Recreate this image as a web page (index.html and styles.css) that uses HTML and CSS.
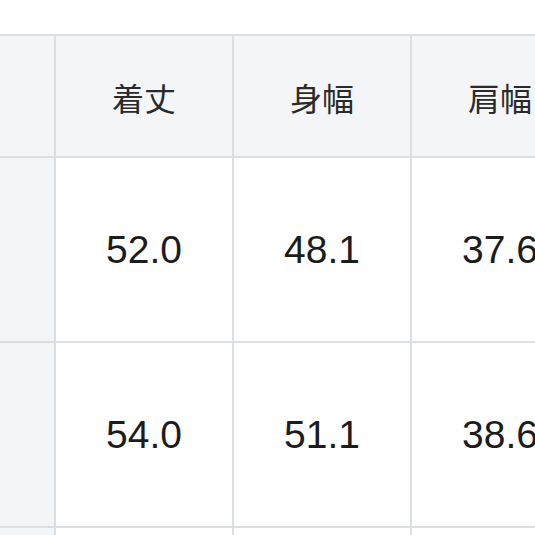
FILE: index.html
```html
<!DOCTYPE html>
<html lang="ja">
<head>
<meta charset="utf-8">
<link rel="stylesheet" href="styles.css">
</head>
<body>
<div class="viewport">
  <div class="table">
    <div class="cell side head"></div>
    <div class="cell head">着丈</div>
    <div class="cell head">身幅</div>
    <div class="cell head">肩幅</div>

    <div class="cell side"></div>
    <div class="cell num">52.0</div>
    <div class="cell num">48.1</div>
    <div class="cell num">37.6</div>

    <div class="cell side"></div>
    <div class="cell num">54.0</div>
    <div class="cell num">51.1</div>
    <div class="cell num">38.6</div>

    <div class="cell side"></div>
    <div class="cell num"></div>
    <div class="cell num"></div>
    <div class="cell num"></div>
  </div>
</div>
</body>
</html>
```

FILE: styles.css
```css
html, body {
  margin: 0;
  padding: 0;
  background: #ffffff;
  overflow: hidden;
}
.viewport {
  width: 535px;
  height: 535px;
  overflow: hidden;
  padding-top: 34px;
  box-sizing: border-box;
}
.table {
  display: grid;
  grid-template-columns: 54px 176px 176px 176px;
  grid-template-rows: 120px 183px 183px 60px;
  gap: 2px;
  padding-top: 2px;
  background: #dcdfe2;
  width: max-content;
}
.cell {
  display: flex;
  align-items: center;
  justify-content: center;
  background: #ffffff;
  color: #1c1c1c;
}
.head {
  background: #f4f5f6;
  font-family: "Noto Sans CJK JP", "Noto Sans", sans-serif;
  font-size: 32px;
  color: #2a2a2a;
  letter-spacing: 0;
  padding-top: 2px;
}
.side {
  background: #f4f5f6;
}
.num {
  font-family: "Liberation Sans", Arial, sans-serif;
  font-size: 39px;
}
```
